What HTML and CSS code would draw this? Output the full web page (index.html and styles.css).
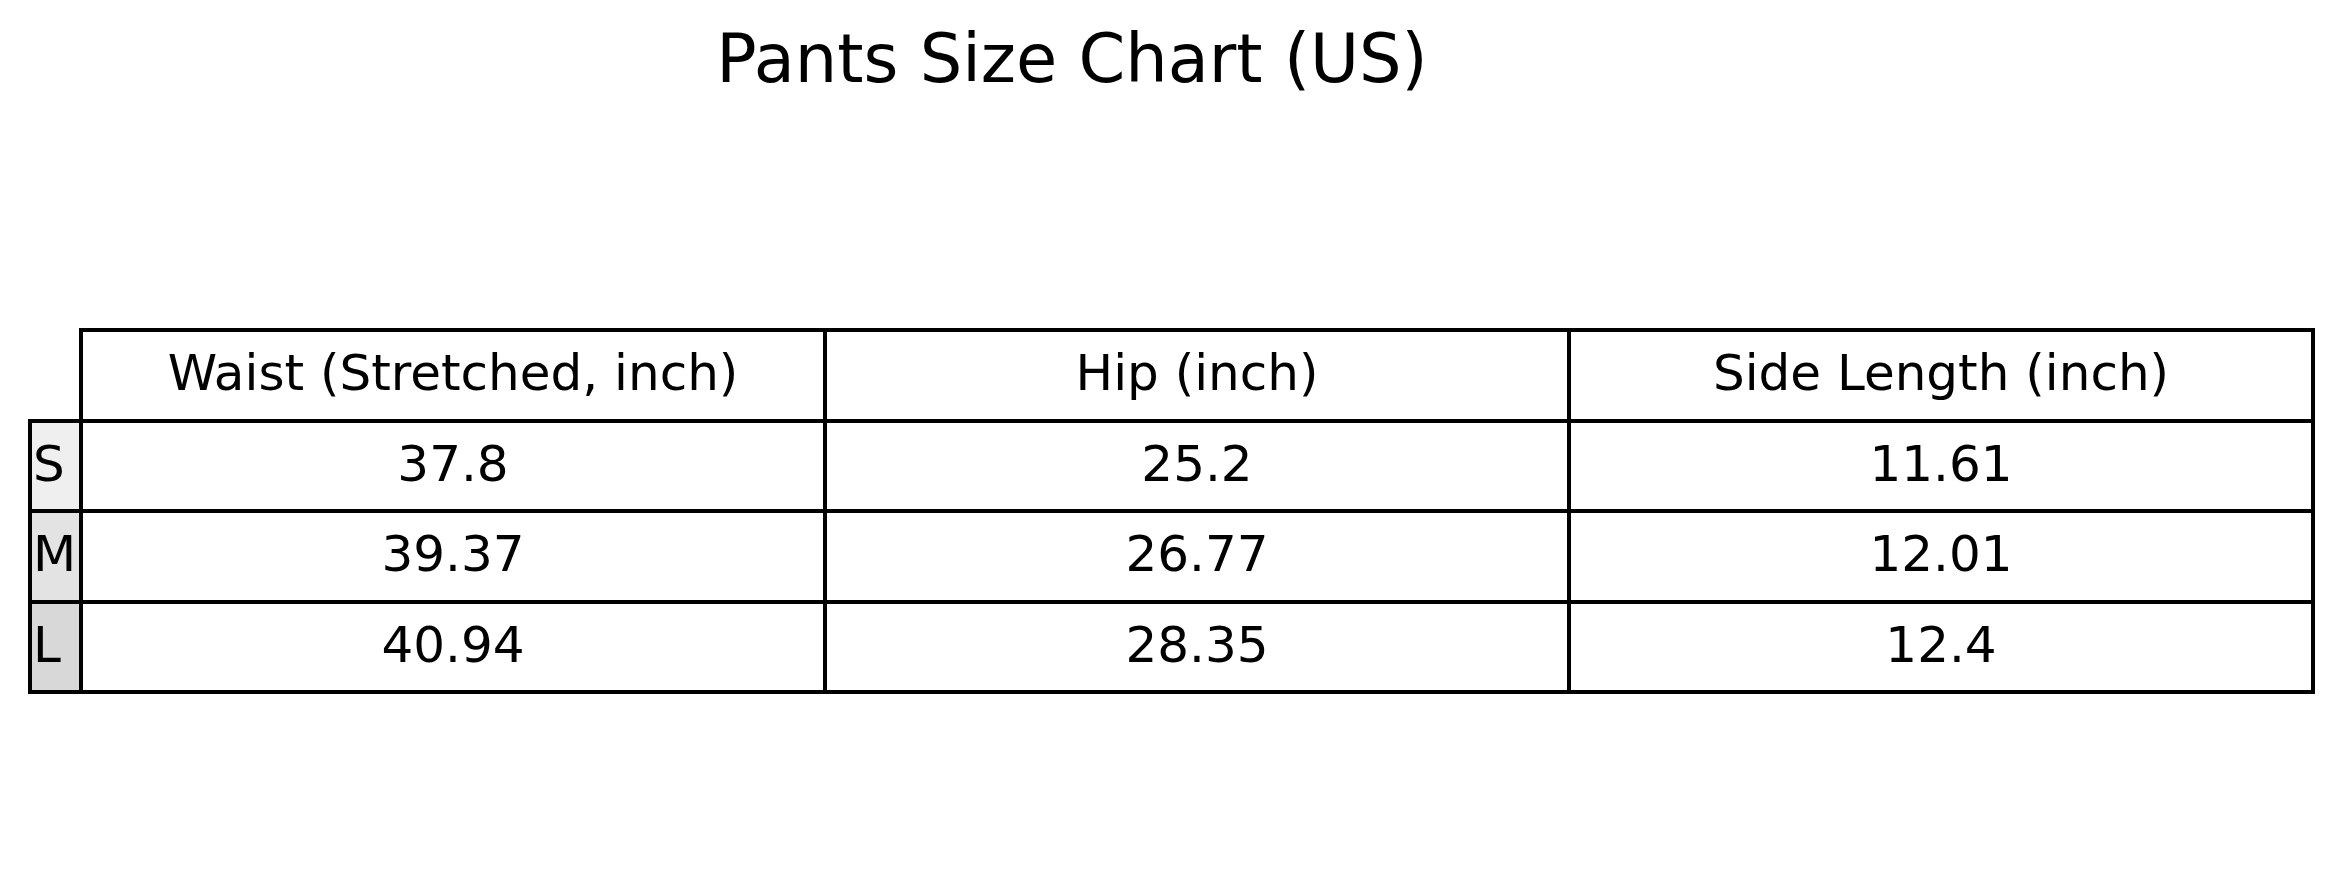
FILE: index.html
```html
<!DOCTYPE html>
<html lang="en">
<head>
<meta charset="utf-8">
<title>Pants Size Chart (US)</title>
<link rel="stylesheet" href="styles.css">
</head>
<body>
<main class="figure">
  <h1 class="title">Pants Size Chart (US)</h1>
  <div class="chart">
    <div class="corner"></div>
    <div class="cell head">Waist (Stretched, inch)</div>
    <div class="cell head">Hip (inch)</div>
    <div class="cell head">Side Length (inch)</div>

    <div class="cell label label-s">S</div>
    <div class="cell">37.8</div>
    <div class="cell">25.2</div>
    <div class="cell">11.61</div>

    <div class="cell label label-m">M</div>
    <div class="cell">39.37</div>
    <div class="cell">26.77</div>
    <div class="cell">12.01</div>

    <div class="cell label label-l">L</div>
    <div class="cell">40.94</div>
    <div class="cell">28.35</div>
    <div class="cell">12.4</div>
  </div>
</main>
</body>
</html>
```

FILE: styles.css
```css
html, body {
  margin: 0;
  padding: 0;
  background: #ffffff;
}

body {
  width: 2343px;
  height: 888px;
  overflow: hidden;
  font-family: "DejaVu Sans", "Liberation Sans", sans-serif;
  color: #000000;
}

.figure {
  display: flex;
  flex-direction: column;
}

.title {
  margin: 20px 0 0 0;
  width: 2144px;
  text-align: center;
  font-size: 67px;
  line-height: 78px;
  font-weight: normal;
  white-space: nowrap;
}

.chart {
  margin: 234px 0 0 32px;
  display: grid;
  grid-template-columns: 51px 744px 744px 744px;
  grid-template-rows: 91px 90px 91px 90px;
  width: max-content;
}

.corner {
  margin: -4px 0 0 -4px;
}

.cell {
  margin: -4px 0 0 -4px;
  border: 4px solid #000000;
  display: flex;
  align-items: center;
  justify-content: center;
  padding-bottom: 5px;
  font-size: 50px;
  line-height: 1;
  white-space: nowrap;
  background: #ffffff;
}

.label {
  justify-content: flex-start;
  padding-left: 1px;
}

.label-s { background: #efefef; }
.label-m { background: #e3e3e3; }
.label-l { background: #d8d8d8; }
```
